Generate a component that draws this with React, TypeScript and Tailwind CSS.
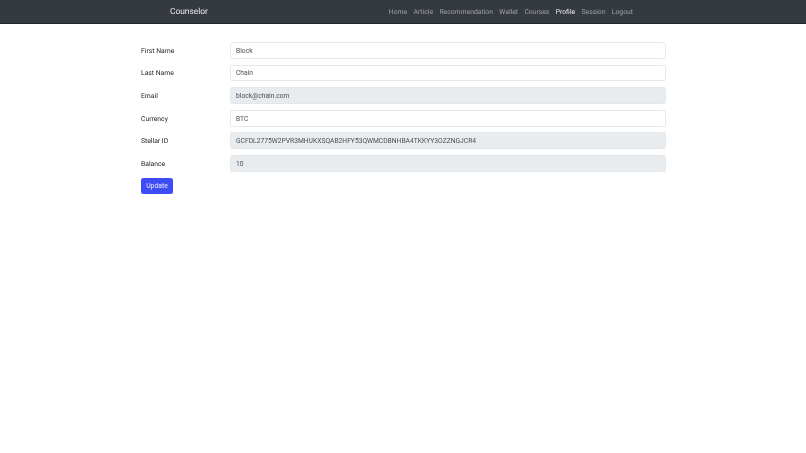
const links = ["Home", "Article", "Recommendation", "Wallet", "Courses", "Profile", "Session", "Logout"];
const rows = [
  { label: "First Name", value: "Block", disabled: false },
  { label: "Last Name", value: "Chain", disabled: false },
  { label: "Email", value: "block@chain.com", disabled: true },
  { label: "Currency", value: "BTC", disabled: false },
  { label: "Stellar ID", value: "GCFDL2775W2PVR3MHUKXSQAB2HFY53QWMCDBNHBA4TKKYY3OZZNGJCR4", disabled: true },
  { label: "Balance", value: "10", disabled: true },
];

export default function App() {
  return (
    <div className="min-h-[453px] bg-white font-['Roboto',sans-serif] text-[6.8px] text-[#212529] blur-[0.3px] [text-rendering:geometricPrecision]">
      <nav className="flex h-[24px] items-center border-b border-[#23272b] bg-[#343a40] pl-[170px] pr-[173px] pt-[2px]">
        <span className="text-[8.4px] text-white/90">Counselor</span>
        <ul className="ml-auto flex gap-[6.35px]">
          {links.map((l) => (
            <li key={l} className={l === "Profile" ? "text-white/90" : "text-white/50"}>{l}</li>
          ))}
        </ul>
      </nav>
      <form className="ml-[141px] w-[525px] pt-[18px]">
        {rows.map((r) => (
          <div key={r.label} className="mb-[5.8px] flex items-center">
            <label className="w-[89px] shrink-0 pt-[1px]">{r.label}</label>
            <input
              readOnly
              value={r.value}
              className={`h-[16.8px] w-full rounded-[2.5px] border px-[5px] pt-[1px] text-[6.72px] text-[#495057] outline-none ${r.disabled ? "border-[#e4e7ea] bg-[#e9ecef]" : "border-[#e6e8ea] bg-white"}`}
            />
          </div>
        ))}
        <button type="button" className="flex h-[16.5px] w-[32px] items-center justify-center rounded-[2.5px] bg-[#3d4cf5] pt-[1px] text-[6.8px] text-white/90">Update</button>
      </form>
    </div>
  );
}
